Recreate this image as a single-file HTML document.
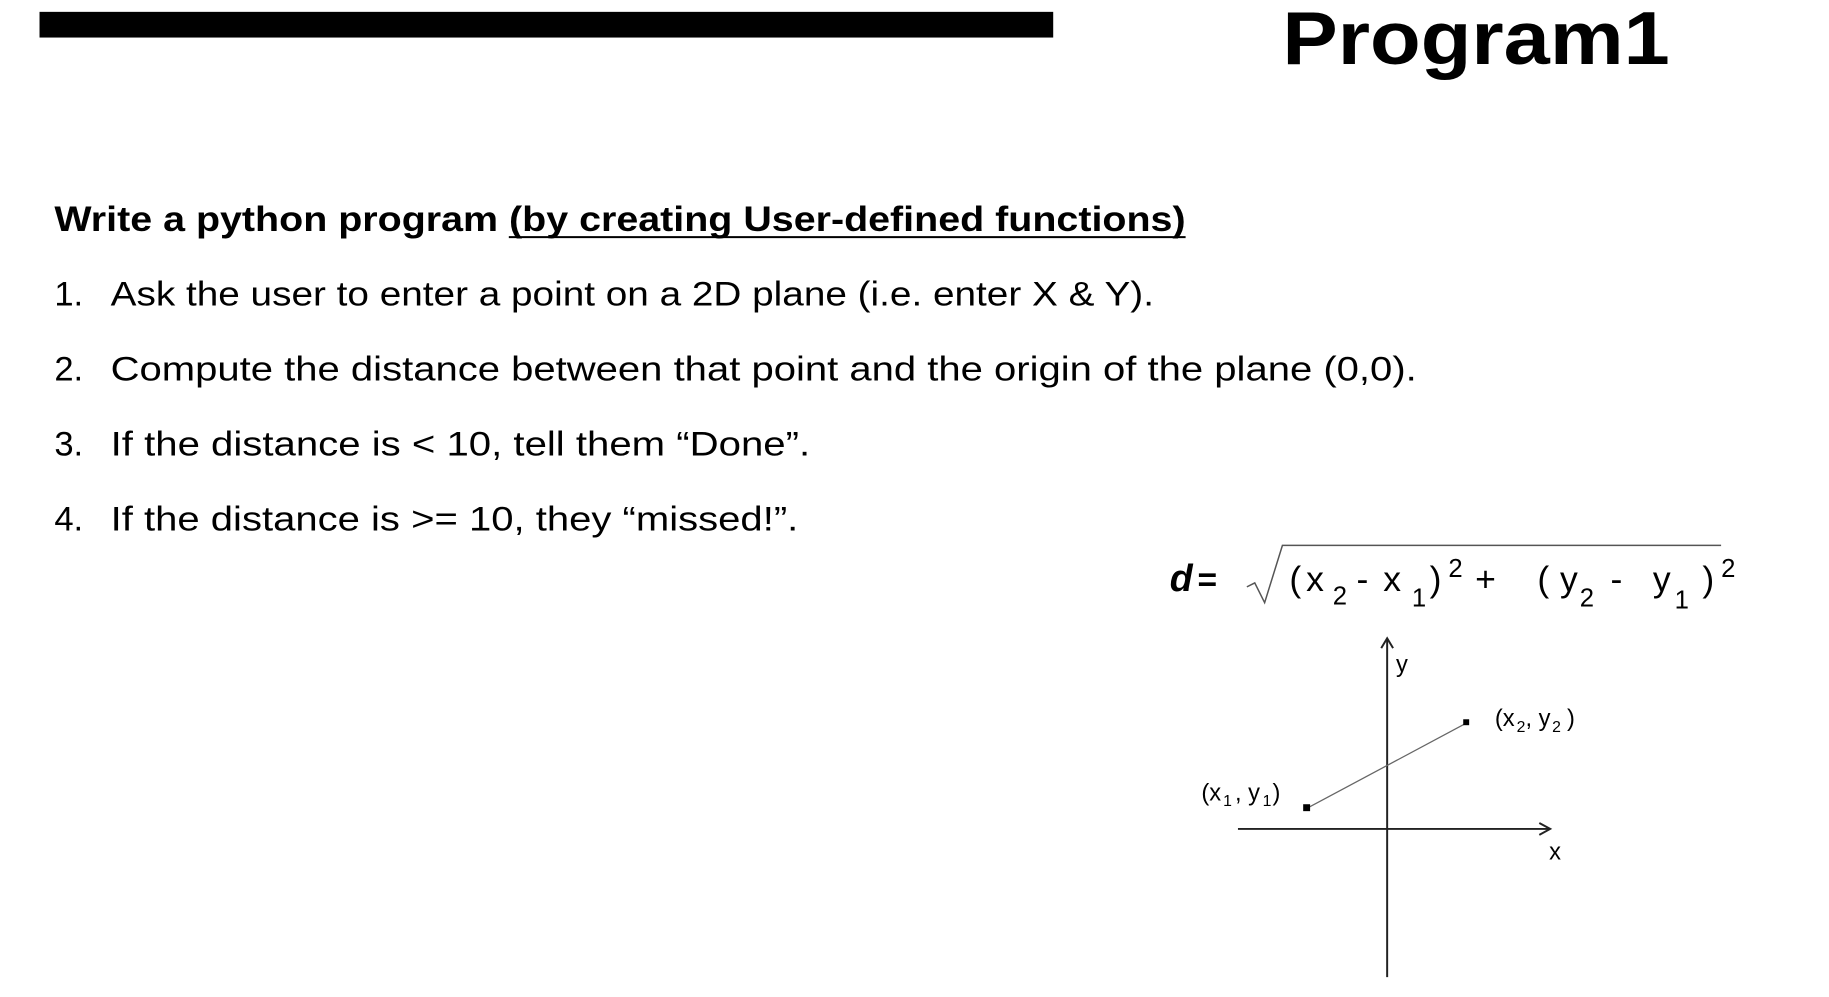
<!DOCTYPE html>
<html><head><meta charset="utf-8"><style>
html,body{margin:0;padding:0;background:#fff;width:1829px;height:997px;overflow:hidden}
svg{position:absolute;left:0;top:0}
text{font-family:"Liberation Sans",sans-serif;fill:#000}
</style></head><body>
<svg width="1829" height="997" viewBox="0 0 1829 997">
<g transform="scale(0.988)">
<rect x="40" y="12" width="1026" height="26" fill="#000"/>
<text x="1298" y="65" font-size="76" font-weight="bold" textLength="392" lengthAdjust="spacingAndGlyphs">Program1</text>
<text x="55" y="234" font-size="36" font-weight="bold" textLength="1145" lengthAdjust="spacingAndGlyphs">Write a python program (by creating User-defined functions)</text>
<line x1="515" y1="240" x2="1200" y2="240" stroke="#000" stroke-width="2"/>
<g font-size="35">
<text x="55" y="309">1.</text><text x="112" y="309" textLength="1056" lengthAdjust="spacingAndGlyphs">Ask the user to enter a point on a 2D plane (i.e. enter X &amp; Y).</text>
<text x="55" y="385">2.</text><text x="112" y="385" textLength="1322" lengthAdjust="spacingAndGlyphs">Compute the distance between that point and the origin of the plane (0,0).</text>
<text x="55" y="461">3.</text><text x="112" y="461" textLength="708" lengthAdjust="spacingAndGlyphs">If the distance is &lt; 10, tell them “Done”.</text>
<text x="55" y="537">4.</text><text x="112" y="537" textLength="696" lengthAdjust="spacingAndGlyphs">If the distance is &gt;= 10, they “missed!”.</text>
</g>
<!-- formula -->
<text x="1184" y="598" font-size="38" font-weight="bold" font-style="italic">d</text>
<text x="1212" y="598" font-size="34" font-weight="bold">=</text>
<polyline points="1262,594 1270,590 1280,610 1298,552 1742,552" fill="none" stroke="#555" stroke-width="1.5"/>
<g font-size="36" fill="#222">
<text x="1305" y="598">(</text><text x="1322" y="598">x</text><text x="1349" y="612" font-size="26">2</text>
<text x="1373" y="598">-</text><text x="1400" y="598">x</text><text x="1429" y="614" font-size="26">1</text>
<text x="1447" y="598">)</text><text x="1466" y="584" font-size="26">2</text>
<text x="1493" y="598">+</text>
<text x="1556" y="598">(</text><text x="1579" y="598">y</text><text x="1599" y="614" font-size="26">2</text>
<text x="1630" y="598">-</text>
<text x="1673" y="598">y</text><text x="1695" y="616" font-size="26">1</text>
<text x="1723" y="598">)</text><text x="1742" y="584" font-size="26">2</text>
</g>
<!-- graph -->
<line x1="1404" y1="647" x2="1404" y2="989" stroke="#222" stroke-width="2"/>
<polyline points="1398,656 1404,646 1410,656" fill="none" stroke="#222" stroke-width="2"/>
<line x1="1253" y1="839" x2="1569" y2="839" stroke="#222" stroke-width="2"/>
<polyline points="1558,833 1569,839 1558,845" fill="none" stroke="#222" stroke-width="2"/>
<line x1="1323" y1="818" x2="1484" y2="732" stroke="#666" stroke-width="1.3"/>
<rect x="1319" y="814" width="7" height="7" fill="#000"/>
<rect x="1481" y="728" width="6" height="6" fill="#000"/>
<g font-size="24" fill="#333">
<text x="1413" y="680">y</text>
<text x="1568" y="870">x</text>
<text x="1513" y="735">(x</text><text x="1535" y="741" font-size="16">2</text><text x="1544" y="735">, y</text><text x="1571" y="741" font-size="16">2</text><text x="1586" y="735">)</text>
<text x="1216" y="810">(x</text><text x="1238" y="816" font-size="16">1</text><text x="1250" y="810">, y</text><text x="1278" y="816" font-size="16">1</text><text x="1288" y="810">)</text>
</g>
</g>
</svg>
</body></html>
